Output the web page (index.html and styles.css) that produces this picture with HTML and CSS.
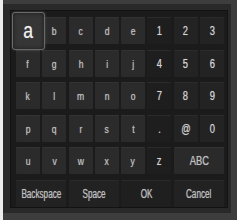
FILE: index.html
```html
<!DOCTYPE html>
<html>
<head>
<meta charset="utf-8">
<link rel="stylesheet" href="styles.css">
</head>
<body>
<div class="page">
  <div class="edge"></div>
  <div class="device">
    <div class="panel">
      <div class="keys">
        <div class="key sel"><span>a</span></div>
        <div class="key"><span>b</span></div>
        <div class="key"><span>c</span></div>
        <div class="key"><span>d</span></div>
        <div class="key"><span>e</span></div>
        <div class="key num k1"><span>1</span></div>
        <div class="key num"><span>2</span></div>
        <div class="key num"><span>3</span></div>

        <div class="key"><span>f</span></div>
        <div class="key"><span>g</span></div>
        <div class="key"><span>h</span></div>
        <div class="key"><span>i</span></div>
        <div class="key"><span>j</span></div>
        <div class="key num k1"><span>4</span></div>
        <div class="key num"><span>5</span></div>
        <div class="key num"><span>6</span></div>

        <div class="key"><span>k</span></div>
        <div class="key"><span>l</span></div>
        <div class="key"><span>m</span></div>
        <div class="key"><span>n</span></div>
        <div class="key"><span>o</span></div>
        <div class="key num k1"><span>7</span></div>
        <div class="key num"><span>8</span></div>
        <div class="key num"><span>9</span></div>

        <div class="key"><span>p</span></div>
        <div class="key"><span>q</span></div>
        <div class="key"><span>r</span></div>
        <div class="key"><span>s</span></div>
        <div class="key"><span>t</span></div>
        <div class="key num k1"><span>.</span></div>
        <div class="key num"><span>@</span></div>
        <div class="key num"><span>0</span></div>

        <div class="key"><span>u</span></div>
        <div class="key"><span>v</span></div>
        <div class="key"><span>w</span></div>
        <div class="key"><span>x</span></div>
        <div class="key"><span>y</span></div>
        <div class="key num k1"><span>z</span></div>
        <div class="key wide abc"><span>ABC</span></div>

        <div class="key wide fn"><span>Backspace</span></div>
        <div class="key wide fn"><span>Space</span></div>
        <div class="key wide fn dark"><span>OK</span></div>
        <div class="key wide fn"><span>Cancel</span></div>
      </div>
    </div>
  </div>
</div>
</body>
</html>
```

FILE: styles.css
```css
html, body {
  margin: 0;
  padding: 0;
}
body {
  background: #3d3d3d;
  width: 237px;
  height: 220px;
  overflow: hidden;
  font-family: "Liberation Sans", Arial, sans-serif;
}
.page {
  display: flex;
  height: 220px;
}
.edge {
  width: 3px;
  background: #ececec;
}
.device {
  margin-top: 4px;
  width: 228px;
  height: 209px;
  box-sizing: border-box;
  background: #292929;
  padding: 6px 3px 5px 7px;
}
.panel {
  height: 100%;
  box-sizing: border-box;
  background: #1b1b1b;
  border: 1px solid #121212;
  padding: 6px 3px 0 5px;
}
.keys {
  display: grid;
  grid-template-columns: repeat(8, 24px);
  grid-template-rows: repeat(6, 27px);
  column-gap: 2.3px;
  row-gap: 5.6px;
}
.key {
  background: #2b2b2b;
  border-top: 1px solid #333;
  box-sizing: border-box;
  border-radius: 1px;
  display: flex;
  align-items: center;
  justify-content: center;
  color: #c0c0c0;
  font-size: 11px;
}
.key span {
  display: inline-block;
  transform: scaleX(0.78);
  text-shadow: 0 0 1px rgba(210,210,210,0.6);
}
.num {
  background: #232323;
  border-top-color: #2b2b2b;
  color: #d4d4d4;
  font-size: 12px;
}
.k1 {
  background: #1e1e1e;
}
.wide {
  grid-column: span 2;
}
.abc {
  background: #2a2a2a;
  font-size: 12px;
}
.fn {
  background: #222;
  border-top-color: #2a2a2a;
  font-size: 12px;
}
.fn span {
  transform: scaleX(0.68);
}
.dark {
  background: #1f1f1f;
}
.sel {
  z-index: 1;
  margin: -5.5px -5px -5.5px -4px;
  background: #363636;
  border: 1px solid #6a6a6a;
  border-radius: 3px;
  box-shadow: 0 0 3px rgba(150,150,150,0.35), inset 0 0 4px rgba(0,0,0,0.5);
  color: #f0f0f0;
  font-size: 22px;
}
.sel span {
  transform: scaleX(0.8);
}
```
